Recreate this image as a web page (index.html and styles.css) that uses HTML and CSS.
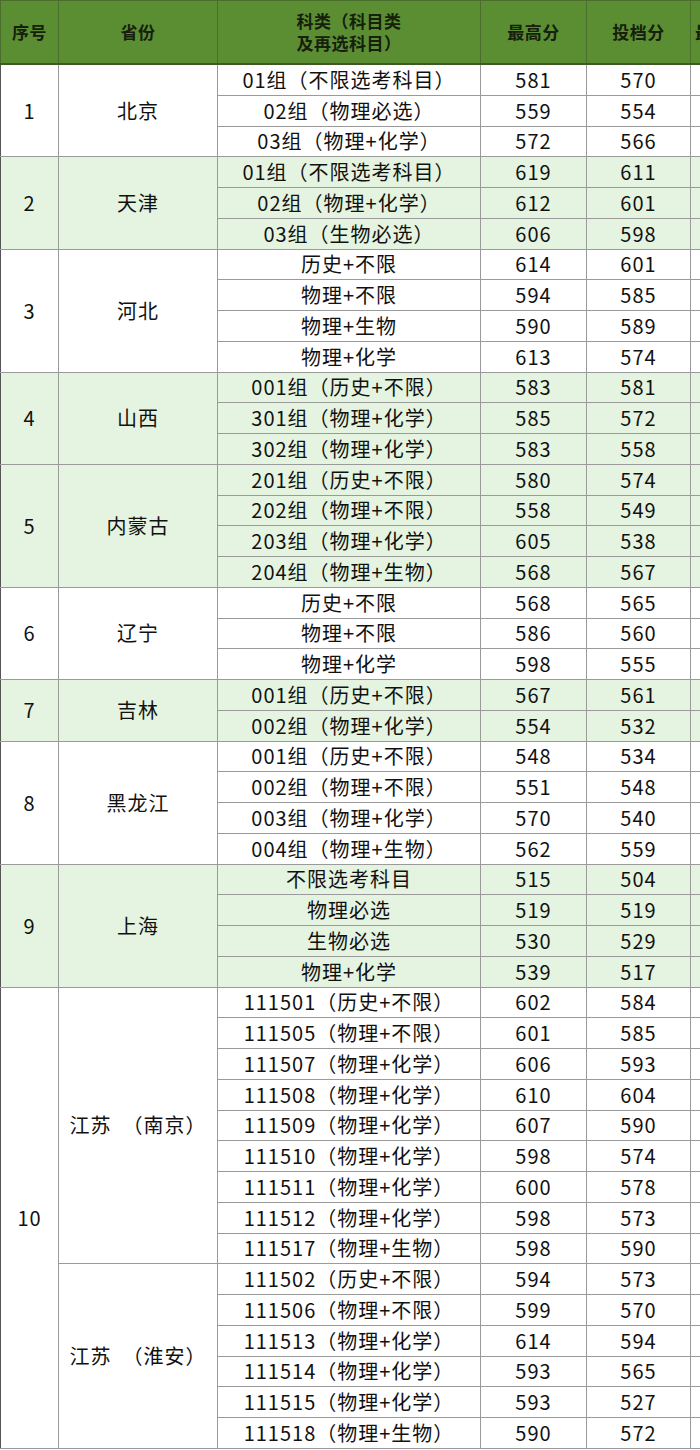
FILE: index.html
```html
<!DOCTYPE html>
<html lang="zh">
<head>
<meta charset="utf-8">
<link rel="stylesheet" href="styles.css">
</head>
<body>
<table class="score">
<colgroup><col class="c1"><col class="c2"><col class="c3"><col class="c4"><col class="c5"><col class="c6"></colgroup>
<thead>
<tr><th>序号</th><th>省份</th><th>科类（科目类<br>及再选科目）</th><th>最高分</th><th>投档分</th><th class="cut">最低位次</th></tr>
</thead>
<tbody class="w">
<tr><td rowspan="3">1</td><td rowspan="3">北京</td><td>01组（不限选考科目）</td><td>581</td><td>570</td><td></td></tr>
<tr><td>02组（物理必选）</td><td>559</td><td>554</td><td></td></tr>
<tr><td>03组（物理+化学）</td><td>572</td><td>566</td><td></td></tr>
</tbody>
<tbody class="g">
<tr><td rowspan="3">2</td><td rowspan="3">天津</td><td>01组（不限选考科目）</td><td>619</td><td>611</td><td></td></tr>
<tr><td>02组（物理+化学）</td><td>612</td><td>601</td><td></td></tr>
<tr><td>03组（生物必选）</td><td>606</td><td>598</td><td></td></tr>
</tbody>
<tbody class="w">
<tr><td rowspan="4">3</td><td rowspan="4">河北</td><td>历史+不限</td><td>614</td><td>601</td><td></td></tr>
<tr><td>物理+不限</td><td>594</td><td>585</td><td></td></tr>
<tr><td>物理+生物</td><td>590</td><td>589</td><td></td></tr>
<tr><td>物理+化学</td><td>613</td><td>574</td><td></td></tr>
</tbody>
<tbody class="g">
<tr><td rowspan="3">4</td><td rowspan="3">山西</td><td>001组（历史+不限）</td><td>583</td><td>581</td><td></td></tr>
<tr><td>301组（物理+化学）</td><td>585</td><td>572</td><td></td></tr>
<tr><td>302组（物理+化学）</td><td>583</td><td>558</td><td></td></tr>
</tbody>
<tbody class="g">
<tr><td rowspan="4">5</td><td rowspan="4">内蒙古</td><td>201组（历史+不限）</td><td>580</td><td>574</td><td></td></tr>
<tr><td>202组（物理+不限）</td><td>558</td><td>549</td><td></td></tr>
<tr><td>203组（物理+化学）</td><td>605</td><td>538</td><td></td></tr>
<tr><td>204组（物理+生物）</td><td>568</td><td>567</td><td></td></tr>
</tbody>
<tbody class="w">
<tr><td rowspan="3">6</td><td rowspan="3">辽宁</td><td>历史+不限</td><td>568</td><td>565</td><td></td></tr>
<tr><td>物理+不限</td><td>586</td><td>560</td><td></td></tr>
<tr><td>物理+化学</td><td>598</td><td>555</td><td></td></tr>
</tbody>
<tbody class="g">
<tr><td rowspan="2">7</td><td rowspan="2">吉林</td><td>001组（历史+不限）</td><td>567</td><td>561</td><td></td></tr>
<tr><td>002组（物理+化学）</td><td>554</td><td>532</td><td></td></tr>
</tbody>
<tbody class="w">
<tr><td rowspan="4">8</td><td rowspan="4">黑龙江</td><td>001组（历史+不限）</td><td>548</td><td>534</td><td></td></tr>
<tr><td>002组（物理+不限）</td><td>551</td><td>548</td><td></td></tr>
<tr><td>003组（物理+化学）</td><td>570</td><td>540</td><td></td></tr>
<tr><td>004组（物理+生物）</td><td>562</td><td>559</td><td></td></tr>
</tbody>
<tbody class="g">
<tr><td rowspan="4">9</td><td rowspan="4">上海</td><td>不限选考科目</td><td>515</td><td>504</td><td></td></tr>
<tr><td>物理必选</td><td>519</td><td>519</td><td></td></tr>
<tr><td>生物必选</td><td>530</td><td>529</td><td></td></tr>
<tr><td>物理+化学</td><td>539</td><td>517</td><td></td></tr>
</tbody>
<tbody class="w">
<tr><td rowspan="15">10</td><td rowspan="9">江苏　（南京）</td><td>111501（历史+不限）</td><td>602</td><td>584</td><td></td></tr>
<tr><td>111505（物理+不限）</td><td>601</td><td>585</td><td></td></tr>
<tr><td>111507（物理+化学）</td><td>606</td><td>593</td><td></td></tr>
<tr><td>111508（物理+化学）</td><td>610</td><td>604</td><td></td></tr>
<tr><td>111509（物理+化学）</td><td>607</td><td>590</td><td></td></tr>
<tr><td>111510（物理+化学）</td><td>598</td><td>574</td><td></td></tr>
<tr><td>111511（物理+化学）</td><td>600</td><td>578</td><td></td></tr>
<tr><td>111512（物理+化学）</td><td>598</td><td>573</td><td></td></tr>
<tr><td>111517（物理+生物）</td><td>598</td><td>590</td><td></td></tr>
<tr><td rowspan="6">江苏　（淮安）</td><td>111502（历史+不限）</td><td>594</td><td>573</td><td></td></tr>
<tr><td>111506（物理+不限）</td><td>599</td><td>570</td><td></td></tr>
<tr><td>111513（物理+化学）</td><td>614</td><td>594</td><td></td></tr>
<tr><td>111514（物理+化学）</td><td>593</td><td>565</td><td></td></tr>
<tr><td>111515（物理+化学）</td><td>593</td><td>527</td><td></td></tr>
<tr><td>111518（物理+生物）</td><td>590</td><td>572</td><td></td></tr>
</tbody>
</table>
</body>
</html>
```

FILE: styles.css
```css
html, body {
  margin: 0;
  padding: 0;
  background: #ffffff;
  overflow: hidden;
}
body {
  width: 700px;
  height: 1450px;
  overflow: hidden;
}
.score {
  border-collapse: collapse;
  table-layout: fixed;
  width: 790px;
  font-family: "Noto Sans CJK SC", "Noto Sans", sans-serif;
  color: #111;
}
.c1 { width: 58px; }
.c2 { width: 159px; }
.c3 { width: 263px; }
.c4 { width: 106px; }
.c5 { width: 104px; }
.c6 { width: 100px; }
.score th {
  background: #5b8e33;
  color: #16200c;
  font-size: 17px;
  font-weight: 700;
  line-height: 22px;
  height: 62px;
  padding: 0;
  border: 1px solid #4a6f2c;
  border-bottom: 2px solid #3d5a24;
  text-align: center;
  vertical-align: middle;
  letter-spacing: 0.5px;
}
.score th.cut {
  text-align: left;
  padding-left: 4px;
}
.score td {
  height: 29.75px;
  padding: 0;
  font-size: 20px;
  line-height: 26px;
  letter-spacing: 1px;
  font-weight: 400;
  text-align: center;
  vertical-align: middle;
  border: 1px solid #9a9a9a;
  white-space: nowrap;
}
.score tbody tr td:first-child {
  border-left: 1px solid #555;
}
.score tbody.g td {
  background: #e5f4e0;
}
.score tbody.w td {
  background: #ffffff;
}
```
